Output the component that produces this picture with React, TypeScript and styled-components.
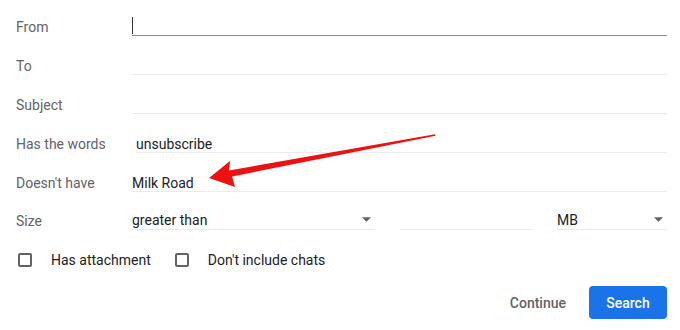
import React from 'react';
import styled, { createGlobalStyle } from 'styled-components';

const GlobalStyle = createGlobalStyle`
  html, body {
    margin: 0;
    padding: 0;
    background: #fff;
  }
  body {
    font-family: Roboto, "Noto Sans", Arial, sans-serif;
    -webkit-font-smoothing: antialiased;
  }
`;

interface IFieldRow {
  label: string,
  value?: string,
  focused?: boolean,
  indent?: number,
}

const rows: IFieldRow[] = [
  { label: 'From', focused: true },
  { label: 'To' },
  { label: 'Subject' },
  { label: 'Has the words', value: 'unsubscribe', indent: 4 },
  { label: "Doesn't have", value: 'Milk Road' },
];

const CaretDown = () => (
  <Caret viewBox="0 0 10 5" width="9" height="5">
    <path d="M0 0 L10 0 L5 5 Z" fill="#5f6368" />
  </Caret>
);

const Annotation = () => (
  <ArrowSvg width="680" height="330" viewBox="0 0 680 330">
    <polygon
      points="209,178 230,161 229,170.5 435,134.2 435.6,135.8 232,176.5 235,187"
      fill="#ee1111"
    />
  </ArrowSvg>
);

const App = () => {
  return (
    <>
      <GlobalStyle />
      <Page>
        <Form>
          {rows.map(r => (
            <Row key={r.label}>
              <Label>{r.label}</Label>
              <Field focused={!!r.focused} indent={r.indent || 0}>
                {r.focused && <Cursor />}
                {r.value}
              </Field>
            </Row>
          ))}
          <Row>
            <Label>Size</Label>
            <SizeGroup>
              <Select width={243}>
                greater than
                <CaretDown />
              </Select>
              <Field focused={false} indent={0} />
              <Select width={110}>
                MB
                <CaretDown />
              </Select>
            </SizeGroup>
          </Row>
          <CheckRow>
            <CheckItem>
              <Box />
              <CheckText>Has attachment</CheckText>
            </CheckItem>
            <CheckItem>
              <Box />
              <CheckText>Don't include chats</CheckText>
            </CheckItem>
          </CheckRow>
          <Actions>
            <TextButton>Continue</TextButton>
            <PrimaryButton>Search</PrimaryButton>
          </Actions>
        </Form>
        <Annotation />
      </Page>
    </>
  );
};

export default App;

const Page = styled.div`
  position: relative;
  width: 680px;
  height: 330px;
  overflow: hidden;
`;

const Form = styled.div`
  padding: 15px 13px 0 16px;
  display: flex;
  flex-direction: column;
`;

const Row = styled.div`
  display: grid;
  grid-template-columns: 116px 1fr;
  align-items: end;
  margin-bottom: 18px;
  &:nth-child(n+5) {
    margin-bottom: 17px;
  }
`;

const Label = styled.div`
  font-size: 14px;
  line-height: 20px;
  color: #5f6368;
  margin-bottom: -1px;
`;

const Field = styled.div<{ focused: boolean, indent: number }>`
  position: relative;
  box-sizing: border-box;
  height: 21px;
  padding-top: 2px;
  font-size: 14px;
  line-height: 20px;
  color: #202124;
  margin-left: ${p => p.indent}px;
  border-bottom: 1px solid ${p => (p.focused ? '#5b95d6' : '#ebebeb')};
`;

const Cursor = styled.span`
  position: absolute;
  left: 0;
  top: 2px;
  width: 1px;
  height: 17px;
  background: #333;
`;

const SizeGroup = styled.div`
  display: grid;
  grid-template-columns: 243px 133px 110px;
  justify-content: space-between;
  align-items: end;
`;

const Select = styled.div<{ width: number }>`
  box-sizing: border-box;
  width: ${p => p.width}px;
  height: 21px;
  padding-top: 2px;
  display: flex;
  align-items: center;
  justify-content: space-between;
  font-size: 14px;
  line-height: 20px;
  color: #202124;
  border-bottom: 1px solid #ebebeb;
`;

const Caret = styled.svg`
  margin-right: 4px;
  margin-top: -1px;
`;

const CheckRow = styled.div`
  display: flex;
  align-items: center;
  gap: 24px;
  margin-top: 3px;
  padding-left: 2px;
`;

const CheckItem = styled.div`
  display: flex;
  align-items: center;
  gap: 19px;
`;

const Box = styled.span`
  width: 10px;
  height: 10px;
  border: 2px solid #5f6368;
  border-radius: 2px;
`;

const CheckText = styled.span`
  font-size: 14px;
  line-height: 20px;
  color: #202124;
`;

const Actions = styled.div`
  display: flex;
  justify-content: flex-end;
  align-items: center;
  gap: 23px;
  margin-top: 16px;
`;

const TextButton = styled.button`
  border: none;
  background: transparent;
  padding: 0;
  font-family: inherit;
  font-size: 14px;
  font-weight: 500;
  color: #5f6368;
`;

const PrimaryButton = styled.button`
  width: 78px;
  height: 33px;
  border: none;
  border-radius: 4px;
  background: #1a73e8;
  font-family: inherit;
  font-size: 14px;
  font-weight: 500;
  color: #fff;
`;

const ArrowSvg = styled.svg`
  position: absolute;
  left: 0;
  top: 0;
  pointer-events: none;
`;
